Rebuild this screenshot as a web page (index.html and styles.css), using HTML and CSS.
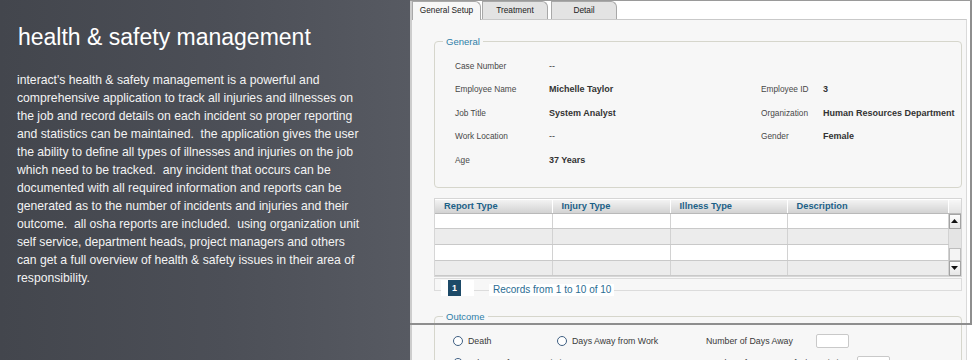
FILE: index.html
```html
<!DOCTYPE html>
<html>
<head>
<meta charset="utf-8">
<title>health &amp; safety management</title>
<link rel="stylesheet" href="styles.css">
</head>
<body>

<div class="intro">
    <h1>health &amp; safety management</h1>
    <p>interact's health &amp; safety management is a powerful and comprehensive application to track all injuries and illnesses on the job and record details on each incident so proper reporting and statistics can be maintained.&nbsp; the application gives the user the ability to define all types of illnesses and injuries on the job which need to be tracked.&nbsp; any incident that occurs can be documented with all required information and reports can be generated as to the number of incidents and injuries and their outcome.&nbsp; all osha reports are included.&nbsp; using organization unit self service, department heads, project managers and others can get a full overview of health &amp; safety issues in their area of responsibility.</p>
</div>

<div class="app">
    <div class="tabs">
        <span class="tab active">General Setup</span>
        <span class="tab tab-treatment">Treatment</span>
        <span class="tab tab-detail">Detail</span>
    </div>

    <div class="panel">
        <fieldset class="group">
            <legend>General</legend>
            <div class="fields">
                <span class="lbl">Case Number</span><span class="val plain">--</span><span></span><span></span>
                <span class="lbl">Employee Name</span><span class="val">Michelle Taylor</span><span class="lbl">Employee ID</span><span class="val">3</span>
                <span class="lbl">Job Title</span><span class="val">System Analyst</span><span class="lbl">Organization</span><span class="val">Human Resources Department</span>
                <span class="lbl">Work Location</span><span class="val plain">--</span><span class="lbl">Gender</span><span class="val">Female</span>
                <span class="lbl">Age</span><span class="val">37 Years</span><span></span><span></span>
            </div>
        </fieldset>

        <div class="grid">
            <table>
                <colgroup>
                    <col class="c1"><col class="c2"><col class="c3"><col class="c4"><col class="c5">
                </colgroup>
                <tr>
                    <th>Report Type</th><th>Injury Type</th><th>Illness Type</th><th>Description</th><th class="corner"></th>
                </tr>
                <tr>
                    <td></td><td></td><td></td><td></td>
                    <td class="scroll" rowspan="4">
                        <div class="scrollbar">
                            <span class="sbtn"><svg width="7" height="4" viewBox="0 0 7 4"><polygon points="0,4 7,4 3.5,0" fill="#111"/></svg></span>
                            <span class="track"></span>
                            <span class="thumb"></span>
                            <span class="sbtn"><svg width="7" height="4" viewBox="0 0 7 4"><polygon points="0,0 7,0 3.5,4" fill="#111"/></svg></span>
                        </div>
                    </td>
                </tr>
                <tr class="alt"><td></td><td></td><td></td><td></td></tr>
                <tr><td></td><td></td><td></td><td></td></tr>
                <tr class="alt"><td></td><td></td><td></td><td></td></tr>
            </table>
        </div>

        <div class="pager">
            <div class="pager-nav">
                <span class="page-box"><span class="page">1</span></span>
                <span class="records">Records from 1 to 10 of 10</span>
            </div>
        </div>

        <fieldset class="group outcome">
            <legend>Outcome</legend>
            <div class="orow">
                <span class="opt w1"><span class="radio"></span>Death</span>
                <span class="opt w2"><span class="radio"></span>Days Away from Work</span>
                <span class="olbl w3">Number of Days Away</span>
                <span class="box"></span>
            </div>
            <div class="orow">
                <span class="opt w4"><span class="radio"></span>Job Transfer or Restriction</span>
                <span class="olbl w5">Number of Days Transfer/Restriction</span>
                <span class="box"></span>
            </div>
        </fieldset>
    </div>

    <div class="frame"></div>
</div>

</body>
</html>
```

FILE: styles.css
```css
body{margin:0;width:972px;height:360px;overflow:hidden;display:flex;font-family:"Liberation Sans",Arial,sans-serif;background:#4b4e55;}

/* left copy */
.intro{width:410px;flex:none;box-sizing:border-box;padding-left:17px;color:#fff;background:linear-gradient(90deg,#43464d 0%,#4c4f57 55%,#575a62 100%);}
.intro h1{margin:23px 0 0 1px;font-size:23px;line-height:28px;font-weight:normal;}
.intro p{margin:20px 0 0;width:344px;font-size:12.2px;line-height:18px;color:#f3f3f3;}

/* screenshot of the app */
.app{flex:1;position:relative;display:flex;flex-direction:column;background:#fff;border-left:2px solid #cdcdcd;font-size:8.3px;color:#444;}
.tabs{display:flex;align-items:flex-start;height:19px;padding-top:1px;box-sizing:border-box;}
.tab{height:18px;box-sizing:border-box;border:1px solid #a8a8a8;border-bottom:none;border-radius:0 6px 0 0;background:#e3e3e3;line-height:16px;text-align:center;color:#222;}
.tab.active{position:relative;z-index:1;width:69px;height:19px;background:#f7f7f7;}
.tab-treatment{width:66px;margin-left:1px;}
.tab-detail{width:66px;margin-left:3px;}

.panel{flex:1;margin-right:5px;padding:0 4px 0 22px;background:#f7f7f7;border-top:1px solid #c9c9c9;border-right:1px solid #dadada;}

.group{margin:16px 0 0;padding:0;border:1px solid #d6d6cc;border-radius:4px;}
.group legend{margin-left:8px;padding:0 3px;font-size:9.5px;line-height:11px;color:#2e7ea8;}
.fields{display:grid;grid-template-columns:94px 212px 62px auto;grid-auto-rows:23.5px;align-items:center;padding:7px 0 15px 20px;}
.lbl{color:#474747;}
.val{font-size:9px;font-weight:bold;color:#333;}
.val.plain{font-weight:normal;}

.grid{margin-top:10px;padding-top:1px;border:1px solid #d6d6d6;background:#fff;}
.grid table{width:100%;border-collapse:collapse;table-layout:fixed;}
.grid .c1{width:117px;}
.grid .c2{width:118px;}
.grid .c3{width:117px;}
.grid .c4{width:161px;}
.grid .c5{width:13px;}
.grid th{height:13px;padding:0 0 0 9px;text-align:left;font-size:9.3px;color:#1c6187;background:linear-gradient(#f3f3f3,#d2d2d2);border-right:1px solid #fff;border-bottom:1px solid #b9b9b9;}
.grid th.corner{padding:0;background:linear-gradient(#f7f7f7,#e2e2e2);border-right:none;}
.grid td{height:14.7px;padding:0;border-right:1px solid #d2d2d2;border-bottom:1px solid #c9c9c9;background:#fff;}
.grid tr.alt td{background:#ececec;}
.grid td.scroll{border:none;background:#e4e4e4;vertical-align:top;}
.scrollbar{display:flex;flex-direction:column;height:62px;}
.sbtn{display:flex;align-items:center;justify-content:center;height:13px;border:1px solid #a3a3a3;background:linear-gradient(#fdfdfd,#e6e6e6);}
.track{flex:1;}
.thumb{height:11px;border:1px solid #bdbdbd;background:#f4f4f4;}

.pager{margin-top:1px;height:11px;border:1px solid #dcdcdc;}
.pager-nav{display:flex;align-items:center;height:16px;margin-top:1px;padding-left:6px;}
.page-box{background:#fff;padding:0 13px 0 7px;}
.page{display:block;width:13px;height:16px;background:#1d4a68;color:#fff;font-size:9px;font-weight:bold;line-height:16px;text-align:center;}
.records{margin:4px 0 0 15px;padding:0 3px 0 4px;background:#fff;font-size:10px;line-height:12px;color:#2a6c92;}

.outcome{margin-top:20px;padding-top:7px;font-size:8.8px;color:#3a3a3a;}
.orow{display:flex;align-items:center;height:22.5px;padding-left:18px;}
.opt{display:flex;align-items:center;gap:5px;}
.radio{width:10px;height:10px;box-sizing:border-box;border:1px solid #3f5f82;border-radius:50%;background:#fff;}
.w1{width:104px;}
.w2{width:149px;}
.w3{width:110px;}
.w4{width:253px;}
.w5{width:151px;}
.box{width:33px;height:14px;box-sizing:border-box;border:1px solid #c9c9c9;border-radius:2px;background:#fff;}

/* window edge of the screenshot, drawn over the content */
.frame{position:absolute;top:0;left:-2px;right:0;height:325px;box-sizing:border-box;border-top:1px solid #9a9a9a;border-right:2px solid #8e8e8e;border-bottom:2px solid #8e8e8e;pointer-events:none;}
```
